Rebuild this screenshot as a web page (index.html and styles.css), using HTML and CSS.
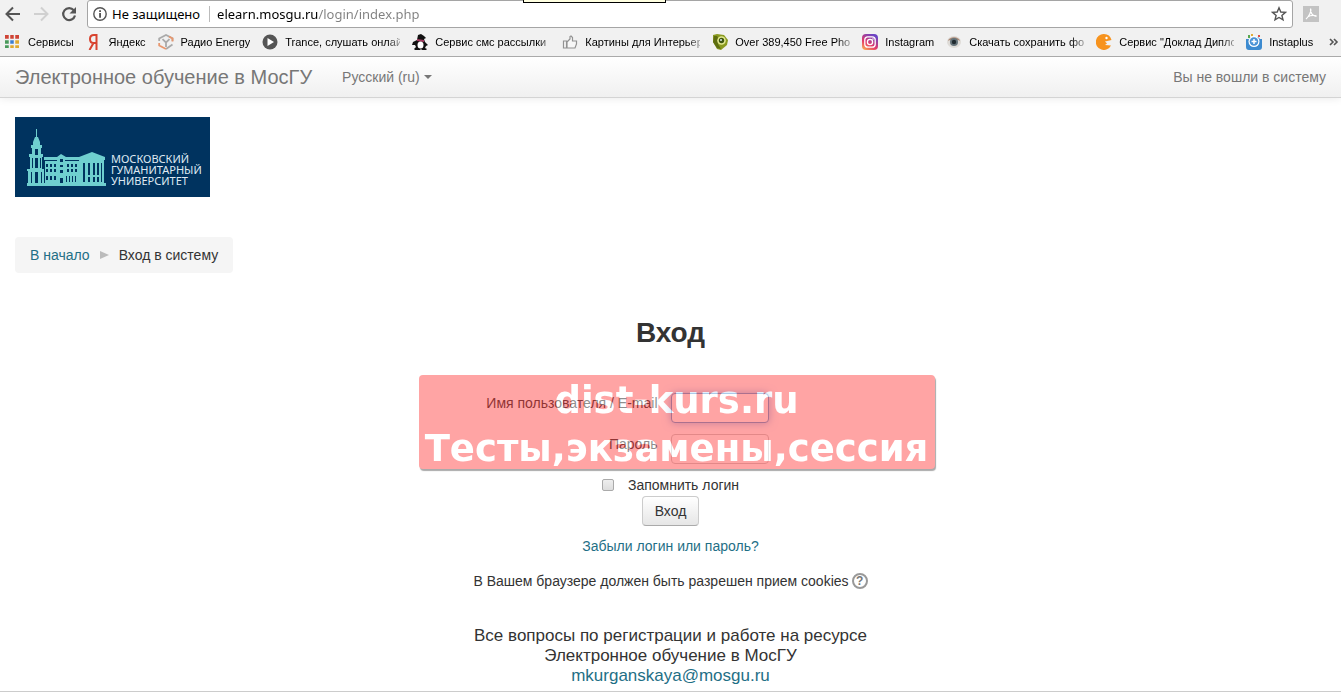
FILE: index.html
```
<!DOCTYPE html>
<html lang="ru">
<head>
  <meta charset="UTF-8">
  <title>Электронное обучение в МосГУ: Вход</title>
  <link rel="stylesheet" href="styles.css">
</head>
<body>
  <div class="browser">
    <div class="toolbar">
      <button type="button" class="tool" aria-label="Назад">
        <svg width="16" height="16" viewBox="0 0 16 16" fill="none" stroke="#555" stroke-width="2"><path d="M15 8H2M8 1.5L1.5 8L8 14.5"/></svg>
      </button>
      <button type="button" class="tool" aria-label="Вперёд">
        <svg width="16" height="16" viewBox="0 0 16 16" fill="none" stroke="#d0d0d0" stroke-width="2"><path d="M1 8H14M8 1.5L14.5 8L8 14.5"/></svg>
      </button>
      <button type="button" class="tool" aria-label="Обновить">
        <svg width="16" height="16" viewBox="0 0 16 16"><path d="M12.8 4.2A6 6 0 1 0 14 9.5" fill="none" stroke="#555" stroke-width="2.2"/><path d="M15 1v6.5H8.5z" fill="#555"/></svg>
      </button>
      <div class="omnibox">
        <svg width="14" height="14" viewBox="0 0 14 14"><circle cx="7" cy="7" r="6.2" fill="none" stroke="#555" stroke-width="1.4"/><path d="M6.2 6h1.7v4.7H6.2zM6.2 3.2h1.7v1.7H6.2z" fill="#444"/></svg>
        <span class="security">Не защищено</span>
        <input type="text" class="address" aria-label="Адрес" value="elearn.mosgu.ru/login/index.php">
        <button type="button" class="star" aria-label="Добавить в закладки">
          <svg width="16" height="16" viewBox="0 0 16 16"><path d="M8 1.8l1.8 4.2 4.6.4-3.5 3 1.1 4.5L8 11.5l-4 2.4 1.1-4.5-3.5-3 4.6-.4z" fill="none" stroke="#555" stroke-width="1.4"/></svg>
        </button>
      </div>
      <button type="button" class="tool" aria-label="PDF">
        <svg width="16" height="16" viewBox="0 0 16 16"><rect width="16" height="16" fill="#c3c3c3"/><path d="M7.5 2.5C9 5 5.5 11 3 13M7.5 3C7 7 10 10 13.5 10.5M4.5 11C7 9.5 10 9 13.5 9.8" fill="none" stroke="#fff" stroke-width="1.2"/></svg>
      </button>
    </div>

    <nav class="bookmarks">
      <a href="#"><svg width="16" height="16" viewBox="0 0 16 16"><path d="M0 1h4v4H0zM5 1h4v4H5zM10 1h4v4h-4z" fill="#cf4436"/><path d="M0 6h4v4H0z" fill="#4a9a5b"/><path d="M5 6h4v4H5z" fill="#3c7ed0"/><path d="M10 6h4v4h-4zM5 11h4v3H5zM10 11h4v3h-4z" fill="#e0a92e"/><path d="M0 11h4v3H0z" fill="#4a9a5b"/><path d="M4.5 0v15M9.5 0v15M0 5.5h15M0 10.5h15" stroke="#f1f1f1" stroke-width="1.5"/></svg><span>Сервисы</span></a>
      <a href="#"><svg width="16" height="16" viewBox="0 0 16 16"><path d="M10.5 16V1H8C5.5 1 4 2.7 4 5s1.3 4 3.5 4h3M7.5 9L3.5 16" fill="none" stroke="#d8432f" stroke-width="2"/></svg><span>Яндекс</span></a>
      <a href="#"><svg width="16" height="16" viewBox="0 0 16 16" fill="none" stroke-width="1.8"><path d="M1.2 7V4.5L8 1l6.5 3.3V7M14.5 10.5L8 15" stroke="#aaa"/><path d="M1.2 9v2.5L8 15M11 2.5l3.5 2v3" stroke="#e8976e"/><path d="M4.5 5.2L8 8.5l3.5-3.3M8 8.5V13" stroke="#aaa"/></svg><span>Радио Energy</span></a>
      <a href="#"><svg width="16" height="16" viewBox="0 0 16 16"><circle cx="8" cy="8" r="7.5" fill="#555"/><path d="M5.5 4l6.5 4-6.5 4z" fill="#fff"/></svg><span>Trance, слушать онлайн</span></a>
      <a href="#"><svg width="16" height="16" viewBox="0 0 16 16"><path d="M6 1l3-1 3 2 2 2-2 1 1 3 3 3-2 1-1 2 2 1-1 1h-4l-1-1-1 1H3l-1-1 2-2-1-2-3 0 1-3 4-2z" fill="#111"/><path d="M5 5l7 1v2L5 7z" fill="#a43a60"/><ellipse cx="8.5" cy="11" rx="3" ry="3.6" fill="#fff"/></svg><span>Сервис смс рассылки |</span></a>
      <a href="#"><svg width="16" height="16" viewBox="0 0 16 16"><path d="M1.5 7h3v7h-3zM5 8l3-3V2.5l1-.5 1.5 1.5V7h4v3l-1.5 4H5z" fill="#f7f7f7" stroke="#929292" stroke-width="1.2"/></svg><span>Картины для Интерьера</span></a>
      <a href="#"><svg width="16" height="16" viewBox="0 0 16 16"><path d="M1 1l4-1 7 1 4 5-1 5-6 5-4-1-4-7z" fill="#8a9a20"/><path d="M2 2l3 0 2 3-1 5 3 5-4-1-4-6z" fill="#5e6d10"/><circle cx="9.5" cy="6.5" r="4.3" fill="#e1e88f"/><circle cx="9.5" cy="6.5" r="2.7" fill="#3d5510"/><circle cx="9" cy="6" r="1" fill="#d7e7e9"/></svg><span>Over 389,450 Free Photos</span></a>
      <a href="#"><svg width="16" height="16" viewBox="0 0 16 16"><defs><linearGradient id="insta" x1="0" y1="1" x2=".6" y2="0"><stop offset="0" stop-color="#fdbf50"/><stop offset=".45" stop-color="#e53a68"/><stop offset="1" stop-color="#6b44c4"/></linearGradient></defs><rect width="16" height="16" rx="4" fill="url(#insta)"/><rect x="2.8" y="2.8" width="10.4" height="10.4" rx="3" fill="none" stroke="#fff" stroke-width="1.3"/><circle cx="8" cy="8" r="2.6" fill="none" stroke="#fff" stroke-width="1.3"/><circle cx="11" cy="5" r=".8" fill="#fff"/></svg><span>Instagram</span></a>
      <a href="#"><svg width="16" height="16" viewBox="0 0 16 16"><ellipse cx="8" cy="8" rx="7" ry="6" fill="#dedbd7"/><path d="M2 7c1-5 11-5 12 0-3-2-9-2-12 0z" fill="#ad8a76"/><circle cx="8" cy="8" r="4" fill="#65737a"/><circle cx="8" cy="8" r="2.2" fill="#202a30"/></svg><span>Скачать сохранить фото</span></a>
      <a href="#"><svg width="16" height="16" viewBox="0 0 16 16"><path d="M8 0a8 8 0 1 0 7 11.5L9 11 9 7.5 15.5 6A8 8 0 0 0 8 0z" fill="#f7931e"/><path d="M9 7.5l2 2L9 11z" fill="#f7931e"/><circle cx="10.5" cy="4" r="1.2" fill="#fff"/></svg><span>Сервис "Доклад Диплом</span></a>
      <a href="#"><svg width="16" height="16" viewBox="0 0 16 16"><path d="M0 5h3l2-2h7l2 2h2v8q0 3-3 3H3q-3 0-3-3z" fill="#3d8bd0"/><circle cx="8" cy="7.5" r="5.5" fill="#fff"/><circle cx="8" cy="7.5" r="4.3" fill="#4a93d6"/><path d="M8 5v5M5.5 7.5h5" stroke="#fff" stroke-width="1.5"/><path d="M2 1h2v3H2z" fill="#59a84f"/><path d="M5 0h2v2H5z" fill="#e0ad38"/><path d="M12 1h2v2h-2z" fill="#e24f45"/></svg><span>Instaplus</span></a>
      <button type="button" class="more" aria-label="Другие закладки">
        <svg width="10" height="8" viewBox="0 0 10 8" fill="none" stroke="#555" stroke-width="1.6"><path d="M1 1l3 3-3 3M5 1l3 3-3 3"/></svg>
      </button>
    </nav>
    <div class="hint"></div>
  </div>

  <header class="navbar">
    <a href="#" class="brand">Электронное обучение в МосГУ</a>
    <button type="button" class="language">Русский (ru)</button>
    <span class="login-info">Вы не вошли в систему</span>
  </header>

  <div class="page">
    <a href="#" class="logo">
      <svg class="building" width="79" height="58" viewBox="0 0 79 58">
        <g fill="#6fcfcf">
          <path d="M9 0h1v10H9zM8 8h3l2 5v3H6v-3zM4 16h11v3H4zM5 19h9v9H5zM2 25h14v3H2zM3 28h12v13H3zM0 40h17v2H0zM1 42h16v13H1z"/>
          <path d="M17 28h13l4-3 5 3h14v3H17zM18 31h35v24H18z"/>
          <path d="M52 28l13-5 13 5v3H52zM53 31h24v24H53zM0 54h79v3H0z"/>
        </g>
        <g fill="#00335f">
          <path d="M8 20h3v6H8zM5 29h1v10H5zM8 29h3v10H8zM13 29h1v10h-1zM4 43h1v11H4zM8 43h3v11H8zM14 43h1v11h-1z"/>
          <path d="M18 31h12v1H18zM38 31h14v1H38zM19 35h2v3h-2zM23 35h2v3h-2zM27 35h2v3h-2zM33 30h3v3h-3zM33 36h3v2h-3zM40 35h2v3h-2zM44 35h2v3h-2zM48 35h2v3h-2zM19 40h2v3h-2zM23 40h2v3h-2zM27 40h2v3h-2zM33 41h3v3h-3zM40 40h2v3h-2zM44 40h2v3h-2zM48 40h2v3h-2zM19 47h2v4h-2zM23 47h2v4h-2zM27 47h2v4h-2zM33 49h3v5h-3zM39 47h1v6h-1zM42 47h1v6h-1zM45 47h1v6h-1zM48 47h1v6h-1z"/>
          <path d="M56 34h2v19h-2zM61 34h2v12h-2zM61 48h2v5h-2zM66 34h2v12h-2zM66 48h2v5h-2zM70 34h2v12h-2zM70 48h2v5h-2zM74 34h1v19h-1z"/>
        </g>
      </svg>
      <span class="logo-text">МОСКОВСКИЙ<br>ГУМАНИТАРНЫЙ<br>УНИВЕРСИТЕТ</span>
    </a>

    <nav class="breadcrumb">
      <a href="#">В начало</a>
      <svg width="9" height="8" viewBox="0 0 9 8"><path d="M0 0l9 4-9 4z" fill="#bbb"/></svg>
      <span>Вход в систему</span>
    </nav>

    <main class="login">
      <h1>Вход</h1>
      <form>
        <div class="fields">
          <div class="form-row">
            <label for="username">Имя пользователя / E-mail</label>
            <input type="text" id="username" class="focused" autofocus>
          </div>
          <div class="form-row">
            <label for="password">Пароль</label>
            <input type="password" id="password">
          </div>
          <div class="banner">dist-kurs.ru<br>Тесты,экзамены,сессия</div>
        </div>
        <div class="remember">
          <input type="checkbox" id="remember">
          <label for="remember">Запомнить логин</label>
        </div>
        <button type="submit" class="submit">Вход</button>
      </form>
      <a href="#" class="forgot">Забыли логин или пароль?</a>
      <div class="cookies">
        <span>В Вашем браузере должен быть разрешен прием cookies</span>
        <button type="button" class="help" aria-label="Справка">?</button>
      </div>
    </main>

    <footer>
      Все вопросы по регистрации и работе на ресурсе<br>
      Электронное обучение в МосГУ<br>
      <a href="#">mkurganskaya@mosgu.ru</a>
    </footer>
  </div>
</body>
</html>
```
FILE: styles.css
```
* {
  box-sizing: border-box;
}

body {
  margin: 0;
  font-family: "Liberation Sans", Arial, sans-serif;
  font-size: 14px;
  line-height: 20px;
  color: #333;
  background: #fff;
}

a {
  color: #1f6f86;
  text-decoration: none;
}

svg {
  display: block;
  flex: none;
}

button {
  font: inherit;
  color: inherit;
  padding: 0;
  border: 0;
  background: none;
}

/* browser bar */
.browser {
  position: relative;
  background: #f1f1f1;
  border-bottom: 1px solid #aaa;
  font-family: "Noto Sans", Tahoma, sans-serif;
  color: #000;
}

.toolbar {
  display: flex;
  align-items: center;
  gap: 12px;
  padding: 0 22px 0 5px;
}

.omnibox {
  flex: 1;
  display: flex;
  align-items: center;
  height: 28px;
  margin: 0 -2px;
  padding: 0 5px;
  border: 1px solid #a5a5a5;
  border-radius: 3px;
  background: #fff;
  font-size: 13px;
}

.security {
  margin-left: 5px;
  padding-right: 9px;
  border-right: 1px solid #bbb;
  line-height: 16px;
}

.address {
  flex: 1;
  padding: 0 0 0 7px;
  border: 0;
  outline: none;
  font: inherit;
  color: transparent;
  /* host in black, path in grey */
  background: linear-gradient(90deg, #000 108px, #808080 108px);
  -webkit-background-clip: text;
  background-clip: text;
}

.bookmarks {
  display: flex;
  align-items: center;
  gap: 12px;
  height: 28px;
  padding: 0 2px 0 5px;
  font-family: "Liberation Sans", Tahoma, sans-serif;
  font-size: 11px;
}

.bookmarks a {
  display: flex;
  align-items: center;
  gap: 7px;
  color: #000;
}

.bookmarks span {
  max-width: 115px;
  overflow: hidden;
  white-space: nowrap;
  -webkit-mask-image: linear-gradient(90deg, #000 102px, transparent 122px);
  mask-image: linear-gradient(90deg, #000 102px, transparent 122px);
}

.more {
  margin-left: auto;
}

/* lower edge of a window tooltip */
.hint {
  position: absolute;
  top: 0;
  left: 39%;
  width: 143px;
  height: 3px;
  border: 1px solid #000;
  border-top: 0;
  background: #ffffe1;
}

/* site header */
.navbar {
  display: flex;
  align-items: center;
  height: 41px;
  padding: 0 15px;
  border-bottom: 1px solid #d4d4d4;
  background: linear-gradient(#fff, #f0f0f0);
  box-shadow: 0 1px 8px rgba(0, 0, 0, 0.08);
  color: #777;
}

.brand {
  color: #777;
  font-size: 20px;
}

.language {
  display: flex;
  align-items: center;
  gap: 4px;
  margin-left: 30px;
}

.language::after {
  content: "";
  border: 4px solid transparent;
  border-top-color: #777;
  border-bottom: 0;
}

.login-info {
  margin-left: auto;
}

.page {
  padding: 19px 15px 5px;
  border-bottom: 1px solid #ccc;
}

.logo {
  display: flex;
  width: 195px;
  height: 80px;
  padding: 12px 0 0 12px;
  gap: 5px;
  background: #00335f;
}

.logo-text {
  padding-top: 24px;
  color: #dfe9f2;
  font: 11px/11px "Noto Sans", sans-serif;
}

.breadcrumb {
  display: inline-flex;
  align-items: center;
  gap: 10px;
  margin-top: 40px;
  padding: 8px 15px;
  border-radius: 4px;
  background: #f5f5f5;
}

/* login form */
.login {
  display: flex;
  flex-direction: column;
  align-items: center;
  margin-top: 40px;
}

h1 {
  margin: 0;
  font-size: 28px;
  line-height: 40px;
}

form {
  display: flex;
  flex-direction: column;
  align-items: center;
}

.fields {
  position: relative;
  width: 516px;
  margin-top: 22px;
  padding-top: 18px;
}

.form-row {
  display: grid;
  grid-template-columns: 1fr 1fr;
  align-items: start;
  height: 41px;
}

.form-row label {
  padding-right: 13px;
  text-align: right;
}

.form-row input {
  width: 98px;
  height: 30px;
  padding: 4px 6px;
  border: 1px solid #ccc;
  border-radius: 4px;
  font: inherit;
}

.form-row .focused {
  border-color: #66a0d8;
  box-shadow: 0 0 8px rgba(82, 140, 220, 0.6);
  outline: none;
}

.banner {
  position: absolute;
  top: 0;
  left: 6px;
  width: 516px;
  height: 94px;
  padding-top: 2px;
  border-radius: 4px;
  background: #ff3636;
  box-shadow: 1px 2px 1px #444;
  opacity: 0.45;
  color: #fff;
  font: bold 37px/48px "DejaVu Sans", Verdana, sans-serif;
  text-align: center;
  white-space: nowrap;
}

.remember {
  display: flex;
  align-items: center;
  gap: 14px;
}

.remember input {
  width: 12px;
  height: 12px;
  margin: 0;
  appearance: none;
  border: 1px solid #aaa;
  border-radius: 2px;
  background: linear-gradient(#eee, #ddd);
}

.submit {
  height: 30px;
  margin-top: 1px;
  padding: 0 12px;
  border: 1px solid #ccc;
  border-bottom-color: #aaa;
  border-radius: 4px;
  background: linear-gradient(#fff, #e6e6e6);
}

.forgot {
  margin-top: 10px;
}

.cookies {
  display: flex;
  align-items: center;
  gap: 3px;
  margin-top: 15px;
}

.help {
  width: 16px;
  height: 16px;
  border: 2px solid #999;
  border-radius: 50%;
  color: #777;
  font-size: 12px;
  font-weight: bold;
  line-height: 12px;
}

footer {
  margin-top: 35px;
  font-size: 17px;
  text-align: center;
}
```
